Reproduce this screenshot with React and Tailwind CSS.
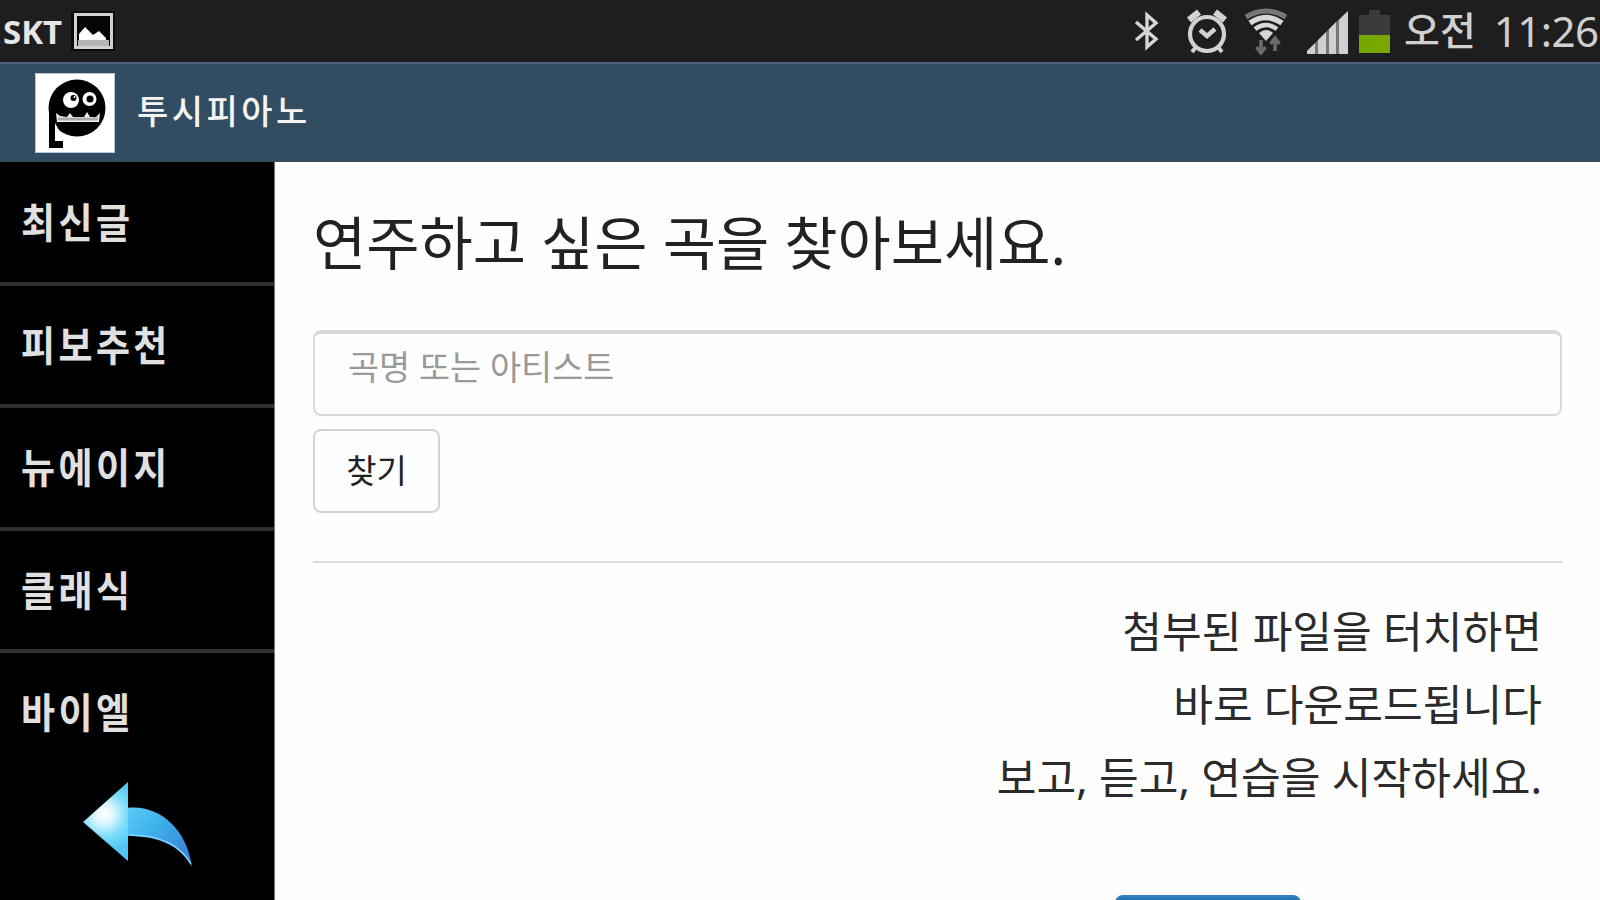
import React from 'react';

const menuItems = ['최신글', '피보추천', '뉴에이지', '클래식', '바이엘'];

const PictureIcon = () => (
    <svg width="44" height="40" viewBox="0 0 44 40" className="ml-2">
        <rect x="0" y="0" width="44" height="40" fill="#0a0a0a" />
        <rect x="4.5" y="3.5" width="36" height="33" fill="#050505" stroke="#d0d0d0" strokeWidth="3" />
        <rect x="7" y="29" width="31" height="6" fill="#b5b5b5" />
        <path d="M8 29V23L14 16L22 24L28 20L35 27V29Z" fill="#fff" />
    </svg>
);

const BluetoothIcon = () => (
    <svg width="28" height="42" viewBox="0 0 28 42" fill="none" stroke="#d6d6d6" strokeWidth="3.4">
        <path d="M3 12L23 29L14 37V5L23 13L3 30" />
    </svg>
);

const AlarmIcon = () => (
    <svg width="44" height="46" viewBox="0 0 44 46" fill="none" stroke="#d2d2d2">
        <circle cx="22" cy="26" r="17" strokeWidth="4.2" />
        <path d="M4 12L14 4M40 12L30 4" strokeWidth="6.5" />
        <path d="M11 39L7 44M33 39L37 44" strokeWidth="4" />
        <path d="M15 22L22 28L30 21" strokeWidth="4.5" />
    </svg>
);

const WifiIcon = () => (
    <svg width="44" height="48" viewBox="0 0 44 48" fill="none">
        <path d="M2 10Q22 -2 42 10" stroke="#777" strokeWidth="5" />
        <path d="M6 16Q22 5 38 16" stroke="#d8d8d8" strokeWidth="5.5" />
        <path d="M11 22Q22 14 33 22" stroke="#d8d8d8" strokeWidth="4.5" />
        <path d="M15 26Q22 20 29 26L22 34Z" fill="#d8d8d8" />
        <path d="M17 33V46M12.5 40L17 46L21.5 40" stroke="#6b6b6b" strokeWidth="3.5" />
        <path d="M31 44V32M26.5 37L31 31L35.5 37" stroke="#6b6b6b" strokeWidth="3.5" />
    </svg>
);

const SignalIcon = () => (
    <svg width="42" height="44" viewBox="0 0 42 44">
        <path d="M0 43V40L8 32V43Z" fill="#d0d0d0" />
        <path d="M11 43V29L19 21V43Z" fill="#d0d0d0" />
        <path d="M22 43V18L29 11V43Z" fill="#d0d0d0" />
        <path d="M31.500 43V9L41 0V43Z" fill="#d0d0d0" />
        <path d="M8 32L11 29V43H8ZM19 21L22 18V43H19ZM29 11L31.500 9V43H29Z" fill="#777" />
    </svg>
);

const BatteryIcon = () => (
    <svg width="32" height="46" viewBox="0 0 32 46">
        <path d="M0 6H10V1H21V6H31V27H0Z" fill="#3b3b3b" />
        <rect x="0" y="26" width="31" height="18" fill="#78a800" />
    </svg>
);

const AppLogo = () => (
    <svg width="80" height="80" viewBox="0 0 80 80">
        <rect width="80" height="80" fill="#fff" />
        <rect x="0.500" y="0.500" width="79" height="79" fill="none" stroke="#b9c5d2" />
        <circle cx="42" cy="35" r="28.500" fill="#000" />
        <path d="M14 33H20V68H28V75H14Z" fill="#000" />
        <path d="M20 50L25 59L30 63L28 68H20Z" fill="#fff" />
        <circle cx="36" cy="27" r="8" fill="#fff" />
        <circle cx="54.500" cy="26" r="7" fill="#fff" />
        <circle cx="38.500" cy="25" r="3" fill="#000" />
        <circle cx="55" cy="26" r="3.500" fill="#000" />
        <circle cx="39.500" cy="24" r="1" fill="#fff" />
        <path d="M21 40L25 43L32 44L35 40L38 44H49L52 39L55 44H61L65 40L64 49H22Z" fill="#f2f2f2" />
        <path d="M23 46H63" stroke="#aaa" strokeWidth="3" />
    </svg>
);

const BackArrow = () => (
    <svg width="112" height="90" viewBox="0 0 112 90">
        <defs>
            <radialGradient id="head" gradientUnits="userSpaceOnUse" cx="21" cy="32" r="38">
                <stop offset="0" stopColor="#ffffff" />
                <stop offset="0.250" stopColor="#dff6fe" />
                <stop offset="0.600" stopColor="#7adcfa" />
                <stop offset="1" stopColor="#4fc6f3" />
            </radialGradient>
            <linearGradient id="tail" x1="0" y1="0" x2="1" y2="0.800">
                <stop offset="0" stopColor="#5ccbf5" />
                <stop offset="0.450" stopColor="#3cafec" />
                <stop offset="1" stopColor="#3a7fd6" />
            </linearGradient>
        </defs>
        <path d="M44 26C75 22 104 46 109 85C96 62 74 54 44 54Z" fill="url(#tail)" />
        <path d="M46 53C74 53 96 61 108 82" fill="none" stroke="#7fd3f7" strokeWidth="1.500" />
        <path d="M0 40L45 0V79Z" fill="url(#head)" />
    </svg>
);

const StatusBar = () => (
    <div className="flex h-[62px] shrink-0 items-center justify-between bg-[#1e1e1e] text-[#d0d0d0]">
        <div className="flex items-center pl-[3px]">
            <span className="w-[60px] whitespace-nowrap text-[33px] leading-none font-bold text-[#e6e6e6]">SKT</span>
            <PictureIcon />
        </div>
        <div className="flex items-center">
            <BluetoothIcon />
            <div className="ml-[24px]"><AlarmIcon /></div>
            <div className="ml-[15px]"><WifiIcon /></div>
            <div className="mt-1 ml-[19px]"><SignalIcon /></div>
            <div className="mt-0.5 ml-[10px]"><BatteryIcon /></div>
            <div className="ml-[13px] flex w-[196px] items-center whitespace-nowrap text-[39px] leading-none">
                <span className="-mt-1 font-medium">오전</span>
                <span className="ml-[18px] text-[42px] tracking-[-0.500px]">11:26</span>
            </div>
        </div>
    </div>
);

const Sidebar = () => (
    <nav className="w-[275px] shrink-0 border-r border-[#777] bg-black">
        <ul className="pt-px">
            {menuItems.map((item) => (
                <li
                    key={item}
                    className="flex h-[122.500px] items-center border-b-4 border-[#303030] pt-px pl-[21px] text-[37px] leading-none font-bold tracking-[3.400px] text-[#e0e0e0] last:border-transparent"
                >
                    <span className="scale-y-110">{item}</span>
                </li>
            ))}
        </ul>
        <button className="mt-[6px] ml-[83px] block" aria-label="뒤로">
            <BackArrow />
        </button>
    </nav>
);

const SearchPage = () => (
    <main className="flex-1 bg-[#fefefe] px-[38px] text-[#222]">
        <h1 className="pt-[48px] text-[57.900px] leading-[65px]">연주하고 싶은 곡을 찾아보세요.</h1>
        <input
            type="text"
            placeholder="곡명 또는 아티스트"
            className="mt-[55px] block h-[86px] w-full rounded-lg border-2 border-t-4 border-[#d9d9d9] px-[33px] pb-[14px] text-[33.800px] placeholder:text-[#999]"
        />
        <button className="mt-[13px] block h-[84px] w-[127px] rounded-lg border-2 border-[#d4d4d4] text-[33px]">찾기</button>
        <hr className="mt-12 border-t-2 border-[#dcdcdc]" />
        <div className="mt-[32px] pr-[20px] text-right text-[43.200px] leading-[73px] text-[#2b2b2b]">
            <p>첨부된 파일을 터치하면</p>
            <p>바로 다운로드됩니다</p>
            <p>보고, 듣고, 연습을 시작하세요.</p>
        </div>
        <button className="mt-[81px] ml-[802px] block h-[84px] w-[186px] rounded-lg border-2 border-[#357ebd] bg-[#2878b8]" aria-label="다운로드" />
    </main>
);

export default function App() {
    return (
        <div className="flex h-[900px] w-[1600px] flex-col overflow-hidden bg-white font-['Noto_Sans','Noto_Sans_CJK_KR',sans-serif]">
            <StatusBar />
            <header className="flex h-[100px] shrink-0 items-center border-t-2 border-[#49637a] bg-[#324d62] pl-[35px]">
                <AppLogo />
                <span className="mb-[4px] ml-[22px] text-[34px] leading-none font-medium tracking-[3.500px] text-[#f4f4f4]">투시피아노</span>
            </header>
            <div className="flex min-h-0 flex-1">
                <Sidebar />
                <SearchPage />
            </div>
        </div>
    );
}
